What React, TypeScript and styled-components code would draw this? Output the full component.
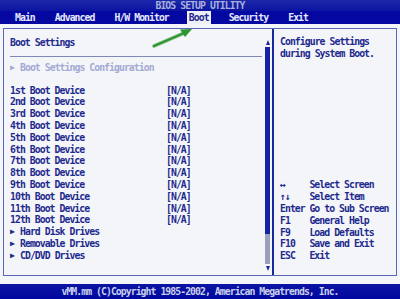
import React from "react";
import styled, { createGlobalStyle } from "styled-components";

const GlobalStyle = createGlobalStyle`
  html, body {
    margin: 0;
    padding: 0;
    background: #f4f5f8;
  }
`;

const Screen = styled.div`
  position: relative;
  width: 400px;
  height: 299px;
  display: flex;
  flex-direction: column;
  background: #f4f5f8;
  font-family: "DejaVu Sans Mono", "Liberation Mono", monospace;
  font-weight: bold;
  font-size: 9.8px;
  letter-spacing: -0.95px;
  color: #1e2a8e;
  overflow: hidden;
`;

const TitleBar = styled.div`
  height: 11px;
  display: flex;
  align-items: center;
  justify-content: center;
  background: linear-gradient(#1c28aa, #0c14a0);
  color: #a8b0dc;
  line-height: 11px;
`;

const MenuBar = styled.div`
  height: 13px;
  display: flex;
  align-items: stretch;
  padding-left: 13px;
  gap: 16px;
  background: #0408a0;
`;

const Tab = styled.div<{ $active?: boolean }>`
  padding: 0 2px;
  display: flex;
  align-items: center;
  background: ${(p) => (p.$active ? "#eef0f6" : "transparent")};
  color: ${(p) => (p.$active ? "#1e2a8e" : "#e4e8ff")};
`;

const Body = styled.div`
  flex: 1;
  display: flex;
  padding: 4px 3px 8px 3px;
`;

const Frame = styled.div`
  flex: 1;
  display: flex;
  border: 1px solid #5a64b8;
`;

const LeftPanel = styled.div`
  flex: 1;
  display: flex;
  padding: 0 2px 0 6px;
  border-right: 2px solid #1a28a0;
`;

const Content = styled.div`
  flex: 1;
  display: flex;
  flex-direction: column;
  padding-top: 8px;
  line-height: 11.8px;
`;

const SectionTitle = styled.div`
  margin-right: 3px;
  padding-bottom: 7px;
  border-bottom: 1px solid #8088b8;
`;

const Row = styled.div<{ $muted?: boolean }>`
  display: flex;
  white-space: pre;
  color: ${(p) => (p.$muted ? "#a4aad4" : "#1e2a8e")};
`;

const Label = styled.span`
  width: 156px;
`;

const Marker = styled.span`
  width: 10px;
  font-size: 8px;
`;

const Spacer = styled.div<{ $h: number }>`
  height: ${(p) => p.$h}px;
`;

const Scrollbar = styled.div`
  width: 5px;
  display: flex;
  flex-direction: column;
  align-items: center;
  margin: 11px 0 4px;
`;

const ScrollArrow = styled.div<{ $down?: boolean }>`
  width: 0;
  height: 0;
  border-left: 2.5px solid transparent;
  border-right: 2.5px solid transparent;
  ${(p) =>
    p.$down
      ? "border-top: 5px solid #1a28a0; margin-top: 2px;"
      : "border-bottom: 5px solid #1a28a0; margin-bottom: 2px;"}
`;

const Track = styled.div`
  flex: 1;
  width: 5px;
  display: flex;
  flex-direction: column;
  background: #9aa0bc;
`;

const Thumb = styled.div`
  flex: 0 0 86%;
  background: #1422a6;
`;

const RightPanel = styled.div`
  width: 116px;
  display: flex;
  flex-direction: column;
  justify-content: space-between;
  padding: 7px 0 13px 6px;
  line-height: 11.8px;
`;

const HelpText = styled.div`
  white-space: pre;
`;

const KeyRow = styled.div`
  display: flex;
  white-space: pre;
`;

const Key = styled.span`
  width: 29.4px;
`;

const Footer = styled.div`
  height: 15px;
  display: flex;
  align-items: center;
  justify-content: center;
  background: linear-gradient(#0c14a4, #0008a0);
  color: #c8d0ec;
  white-space: pre;
`;

const Pointer = styled.svg`
  position: absolute;
  left: 0;
  top: 0;
  pointer-events: none;
`;

const devices = [
  "1st", "2nd", "3rd", "4th", "5th", "6th",
  "7th", "8th", "9th", "10th", "11th", "12th",
];

const keys: [string, string][] = [
  ["↔", "Select Screen"],
  ["↑↓", "Select Item"],
  ["Enter", "Go to Sub Screen"],
  ["F1", "General Help"],
  ["F9", "Load Defaults"],
  ["F10", "Save and Exit"],
  ["ESC", "Exit"],
];

const tabs = ["Main", "Advanced", "H/W Monitor", "Boot", "Security", "Exit"];

export default function App() {
  return (
    <>
      <GlobalStyle />
      <Screen>
        <TitleBar>BIOS SETUP UTILITY</TitleBar>
        <MenuBar>
          {tabs.map((t) => (
            <Tab key={t} $active={t === "Boot"}>
              {t}
            </Tab>
          ))}
        </MenuBar>
        <Body>
          <Frame>
            <LeftPanel>
              <Content>
                <SectionTitle>Boot Settings</SectionTitle>
                <Spacer $h={5} />
                <Row $muted>
                  <Marker>▶</Marker>Boot Settings Configuration
                </Row>
                <Spacer $h={11} />
                {devices.map((d) => (
                  <Row key={d}>
                    <Label>{d} Boot Device</Label>[N/A]
                  </Row>
                ))}
                {["Hard Disk Drives", "Removable Drives", "CD/DVD Drives"].map(
                  (d) => (
                    <Row key={d}>
                      <Marker>▶</Marker>
                      {d}
                    </Row>
                  )
                )}
              </Content>
              <Scrollbar>
                <ScrollArrow />
                <Track>
                  <Thumb />
                </Track>
                <ScrollArrow $down />
              </Scrollbar>
            </LeftPanel>
            <RightPanel>
              <HelpText>{"Configure Settings\nduring System Boot."}</HelpText>
              <div>
                {keys.map(([k, v]) => (
                  <KeyRow key={k}>
                    <Key>{k}</Key>
                    {v}
                  </KeyRow>
                ))}
              </div>
            </RightPanel>
          </Frame>
        </Body>
        <Footer>vMM.mm (C)Copyright 1985-2002, American Megatrends, Inc.</Footer>
        <Pointer width="400" height="60" viewBox="0 0 400 60">
          <line x1="154" y1="46" x2="183" y2="33.5" stroke="#9fc89f" strokeWidth="4" strokeLinecap="round" />
          <line x1="154" y1="46" x2="183" y2="33.5" stroke="#2a962e" strokeWidth="2.2" strokeLinecap="round" />
          <polygon points="192,29 180,29.5 185,37" fill="#2a962e" />
        </Pointer>
      </Screen>
    </>
  );
}
